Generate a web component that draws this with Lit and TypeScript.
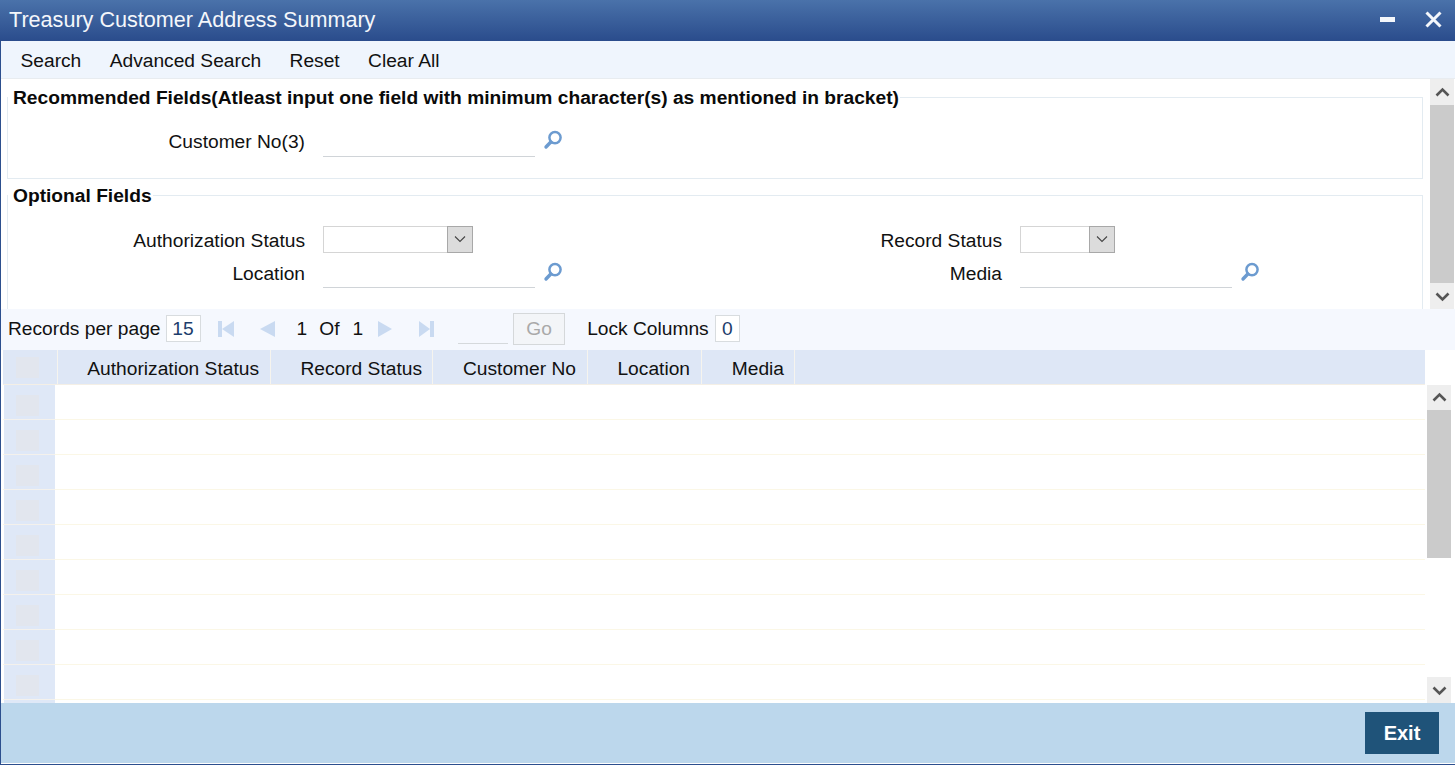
import { LitElement, html, css, svg } from "lit";
import { customElement } from "lit/decorators.js";

const chevUp = svg`<path d="M1.5 9.5 L7.5 3.5 L13.5 9.5" fill="none" stroke="#555" stroke-width="2.6"/>`;
const chevDown = svg`<path d="M1.5 3.5 L7.5 9.5 L13.5 3.5" fill="none" stroke="#555" stroke-width="2.6"/>`;

const lens = html`<svg class="lens" width="20" height="20" viewBox="0 0 20 20"><circle cx="12" cy="7.6" r="5.6" fill="none" stroke="#6c9bd0" stroke-width="2.5"/><path d="M7.8 12 L3 17" stroke="#6c9bd0" stroke-width="3.4" stroke-linecap="round"/></svg>`;

@customElement("app-root")
export class AppRoot extends LitElement {
  static styles = css`
    :host { display: block; width: 1455px; height: 765px; overflow: hidden; font-family: "Liberation Sans", Arial, sans-serif; color: #111; font-size: 19.2px; background: #fff; }
    * { box-sizing: border-box; }
    .frame { width: 1455px; height: 765px; display: flex; flex-direction: column; border-left: 1px solid #2c4f8e; border-bottom: 1px solid #2c4f8e; }
    .title { flex: 0 0 41px; margin-left: -1px; background: linear-gradient(#4a72aa, #2a4c8c); color: #f4f7fb; display: flex; align-items: center; justify-content: space-between; padding: 0 13px 2px 9px; font-size: 21.6px; }
    .winbtns { display: flex; align-items: center; gap: 30px; }
    .tools { flex: 0 0 38px; background: #eff5fd; display: flex; align-items: center; padding: 2px 0 0 19.5px; gap: 28.4px; border-bottom: 1px solid #e8ecf0; }
    .search { flex: 0 0 230px; display: flex; overflow: hidden; background: #fff; }
    .search-body { flex: 1; padding: 8px 7px 0 6px; min-width: 0; }
    fieldset { margin: 0; padding: 0; border: 1px solid #e3ebf1; display: block; }
    legend { margin-left: 0; padding: 0 1px 0 5px; font-weight: bold; font-size: 19.2px; line-height: 21px; color: #0a0a0a; }
    .fs1 { height: 92px; margin-bottom: 6px; }
    .fs1 .fields { padding-top: 20px; }
    .fs2 { height: 150px; }
    .fs2 .fields { padding-top: 20px; display: grid; grid-template-columns: 697px 1fr; row-gap: 7px; }
    .fs2 .label { padding-top: 4px; }
    .fs2 .lens { margin-top: -1px; }
    .field { display: flex; align-items: center; height: 26px; }
    .label { width: 315px; text-align: right; padding: 2px 18px 0 0; flex: none; }
    .input { width: 212px; height: 26px; border-bottom: 1px solid #d0d4d8; margin-top: 6px; flex: none; }
    .lens { margin-left: 8px; flex: none; margin-top: -3px; }
    .select { height: 27px; border: 1px solid #d5d5d5; display: flex; justify-content: flex-end; flex: none; background: #fff; }
    .select b { width: 26px; background: #dcdcdc; border: 1px solid #a8a8a8; margin: -1px -1px -1px 0; display: flex; align-items: center; justify-content: center; }
    .sel1 { width: 150px; }
    .sel2 { width: 95px; }
    .sb { flex: none; display: flex; flex-direction: column; background: #fff; }
    .sb1 { width: 24px; margin-right: 1px; }
    .sb2 { width: 24px; margin-left: 2px; margin-right: 4px; }
    .sb i { display: flex; align-items: center; justify-content: center; background: #eeeeee; flex: 0 0 26px; }
    .sb u { display: block; background: #cbcbcb; }
    .sb s { display: block; flex: 1; }
    .sb1 u { flex: 1; }
    .sb1 s { display: none; }
    .sb2 i:first-child { flex-basis: 25px; }
    .sb2 u { flex: 0 0 148px; }
    .pager { flex: 0 0 41px; background: #f5f8fe; display: flex; align-items: center; padding-left: 7px; padding-bottom: 2px; }
    .num { border: 1px solid #d8dcdf; background: #fff; color: #1c3d6c; height: 27px; display: flex; align-items: center; justify-content: center; }
    .n15 { width: 35px; margin-left: 5px; margin-right: 16px; }
    .n0 { width: 25px; margin-left: 6px; }
    .nav { display: flex; align-items: center; flex: none; }
    .nav svg { display: block; }
    .prev { margin-left: 25px; }
    .next { margin-left: 15px; }
    .last { margin-left: 27px; }
    .p1 { flex: none; margin-left: 22px; }
    .pof { flex: none; margin-left: 12px; }
    .p2 { flex: none; margin-left: 13px; }
    .goin { width: 50px; height: 27px; border-bottom: 1px solid #d5d9dc; margin-left: 23px; margin-top: 4px; }
    .go { width: 52px; height: 32px; margin-left: 5px; border: 1px solid #d5d8da; background: #f3f5f8; color: #a9a9a9; display: flex; align-items: center; justify-content: center; margin-right: 22px; }
    .table { flex: 1; min-height: 0; display: flex; overflow: hidden; flex-direction: column; padding-left: 2px; }
    .thead { flex: 0 0 35px; margin-right: 30px; background: #dee7f6; display: flex; border-bottom: 1px solid #f4efe6; }
    .th { display: flex; align-items: center; justify-content: flex-end; padding: 4px 11px 0 0; border-right: 1px solid #f6f4ee; flex: none; height: 34px; }
    .th:nth-child(3), .th:last-child { padding-right: 10px; }
    .th0 { width: 55px; justify-content: center; padding: 0 6px 0 0; }
    .box { display: block; width: 23px; height: 21px; background: #e2e6ee; }
    .tbody { flex: 1; min-height: 0; display: flex; }
    .rows { flex: 1; min-width: 0; overflow: hidden; }
    .row { height: 35px; display: flex; border-bottom: 1px solid #fbf7e6; }
    .cell0 { flex: 0 0 51px; margin-left: 1px; background: #dfe8f7; display: flex; align-items: flex-start; justify-content: center; padding: 10px 5px 0 0; border-bottom: 1px solid #f4f1ec; height: 35px; }
    .footer { flex: 0 0 60px; margin-bottom: 1px; background: #bcd7ec; display: flex; align-items: center; justify-content: flex-end; padding-right: 16px; }
    .exit { width: 74px; height: 42px; background: #1f5379; color: #fff; font-weight: bold; font-size: 20px; display: flex; align-items: center; justify-content: center; }
  `;

  private sb(cls: string) {
    return html`<div class="sb ${cls}">
      <i><svg width="15" height="13" viewBox="0 0 15 13">${chevUp}</svg></i>
      <u></u><s></s>
      <i><svg width="15" height="13" viewBox="0 0 15 13">${chevDown}</svg></i>
    </div>`;
  }

  private selectBtn() {
    return html`<b><svg width="14" height="10" viewBox="0 0 14 10"><path d="M2 2.5 L7 7.5 L12 2.5" fill="none" stroke="#444" stroke-width="1.1"/></svg></b>`;
  }

  render() {
    const cols: [string, number][] = [["Authorization Status", 213], ["Record Status", 162], ["Customer No", 155], ["Location", 114], ["Media", 93]];
    const rows = Array.from({ length: 10 });
    return html`<div class="frame">
      <div class="title"><span>Treasury Customer Address Summary</span>
        <span class="winbtns">
          <svg width="15" height="6" viewBox="0 0 15 6"><rect y="0" width="15" height="5" fill="#f4f7fb"/></svg>
          <svg width="17" height="17" viewBox="0 0 17 17"><path d="M1.5 1.5 L15.5 15.5 M15.5 1.5 L1.5 15.5" stroke="#f4f7fb" stroke-width="3"/></svg>
        </span>
      </div>
      <div class="tools"><span>Search</span><span>Advanced Search</span><span>Reset</span><span>Clear All</span></div>
      <div class="search">
        <div class="search-body">
          <fieldset class="fs1">
            <legend>Recommended Fields(Atleast input one field with minimum character(s) as mentioned in bracket)</legend>
            <div class="fields"><div class="field"><span class="label">Customer No(3)</span><span class="input"></span>${lens}</div></div>
          </fieldset>
          <fieldset class="fs2">
            <legend>Optional Fields</legend>
            <div class="fields">
              <div class="field"><span class="label">Authorization Status</span><span class="select sel1">${this.selectBtn()}</span></div>
              <div class="field"><span class="label">Record Status</span><span class="select sel2">${this.selectBtn()}</span></div>
              <div class="field"><span class="label">Location</span><span class="input"></span>${lens}</div>
              <div class="field"><span class="label">Media</span><span class="input"></span>${lens}</div>
            </div>
          </fieldset>
        </div>
        ${this.sb("sb1")}
      </div>
      <div class="pager">
        <span>Records per page</span><span class="num n15">15</span>
        <span class="nav">
          <svg width="18" height="18" viewBox="0 0 18 18"><path d="M1 1h4v16H1z M5 9 L17 1 V17z" fill="#c9daf1"/></svg>
          <svg class="prev" width="15" height="16" viewBox="0 0 15 16"><path d="M0 8 L15 0 V16z" fill="#c9daf1"/></svg>
        </span>
        <span class="p1">1</span>
        <span class="pof">Of</span>
        <span class="p2">1</span>
        <span class="nav">
          <svg class="next" width="14" height="16" viewBox="0 0 14 16"><path d="M14 8 L0 0 V16z" fill="#c9daf1"/></svg>
          <svg class="last" width="16" height="18" viewBox="0 0 16 18"><path d="M0 1 L11 9 L0 17z M11 1h4v16h-4z" fill="#c9daf1"/></svg>
        </span>
        <span class="goin"></span>
        <span class="go">Go</span>
        <span>Lock Columns</span><span class="num n0">0</span>
      </div>
      <div class="table">
        <div class="thead">
          <div class="th th0"><span class="box"></span></div>
          ${cols.map(([t, w]) => html`<div class="th" style="width:${w}px">${t}</div>`)}
        </div>
        <div class="tbody">
          <div class="rows">
            ${rows.map(() => html`<div class="row"><div class="cell0"><span class="box"></span></div></div>`)}
          </div>
          ${this.sb("sb2")}
        </div>
      </div>
      <div class="footer"><span class="exit">Exit</span></div>
    </div>`;
  }
}
